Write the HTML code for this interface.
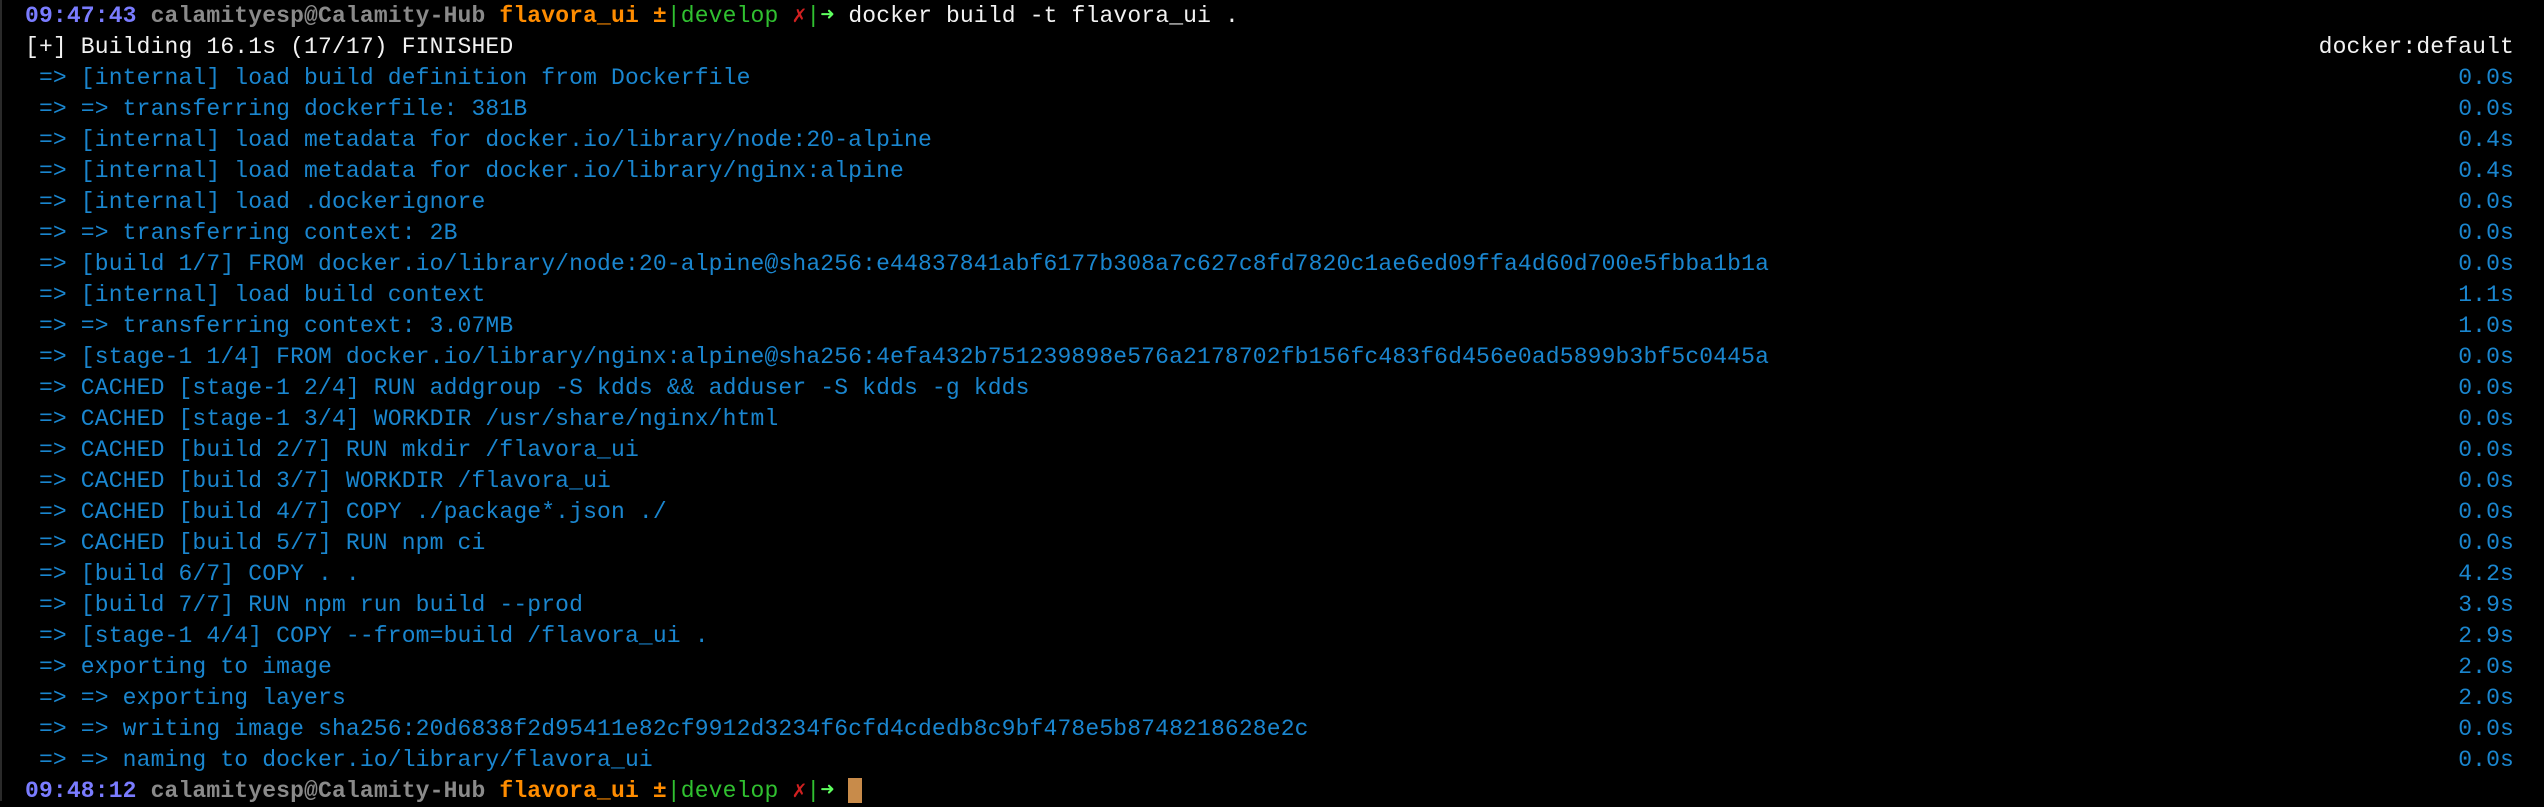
<!DOCTYPE html>
<html><head><meta charset="utf-8"><style>
html,body{margin:0;padding:0;background:#000;}
body{width:2544px;height:801px;overflow:hidden;position:relative;border-left:2px solid #2a2a2a;box-sizing:border-box;}
.l,.r{position:absolute;height:31px;line-height:31px;white-space:pre;font-family:"Liberation Mono","DejaVu Sans Mono",monospace;font-size:23px;letter-spacing:0.15px;color:#1a86cf;}
.l{left:23px;}
.r{right:30px;text-align:right;}
.w{color:#f2f2f2}
.t{color:#7a7cff;font-weight:bold}
.u{color:#8a8a8a;font-weight:bold}
.o{color:#ff8c00;font-weight:bold}
.g{color:#30c030}
.x{color:#d02020}
.a{color:#5fff5f;font-weight:bold}
.c{display:inline-block;width:14px;height:25px;background:#c88b4a;vertical-align:middle}
</style></head><body>
<div class="l" style="top:1px"><span class="t">09:47:43</span> <span class="u">calamityesp@Calamity-Hub</span> <span class="o">flavora_ui ±</span><span class="g">|develop </span><span class="x">✗</span><span class="g">|</span><span class="a">➜</span> <span class="w">docker build -t flavora_ui .</span></div>
<div class="l w" style="top:32px">[+] Building 16.1s (17/17) FINISHED</div><div class="r w" style="top:32px">docker:default</div>
<div class="l" style="top:63px"> => [internal] load build definition from Dockerfile</div><div class="r" style="top:63px">0.0s</div>
<div class="l" style="top:94px"> => => transferring dockerfile: 381B</div><div class="r" style="top:94px">0.0s</div>
<div class="l" style="top:125px"> => [internal] load metadata for docker.io/library/node:20-alpine</div><div class="r" style="top:125px">0.4s</div>
<div class="l" style="top:156px"> => [internal] load metadata for docker.io/library/nginx:alpine</div><div class="r" style="top:156px">0.4s</div>
<div class="l" style="top:187px"> => [internal] load .dockerignore</div><div class="r" style="top:187px">0.0s</div>
<div class="l" style="top:218px"> => => transferring context: 2B</div><div class="r" style="top:218px">0.0s</div>
<div class="l" style="top:249px"> => [build 1/7] FROM docker.io/library/node:20-alpine@sha256:e44837841abf6177b308a7c627c8fd7820c1ae6ed09ffa4d60d700e5fbba1b1a</div><div class="r" style="top:249px">0.0s</div>
<div class="l" style="top:280px"> => [internal] load build context</div><div class="r" style="top:280px">1.1s</div>
<div class="l" style="top:311px"> => => transferring context: 3.07MB</div><div class="r" style="top:311px">1.0s</div>
<div class="l" style="top:342px"> => [stage-1 1/4] FROM docker.io/library/nginx:alpine@sha256:4efa432b751239898e576a2178702fb156fc483f6d456e0ad5899b3bf5c0445a</div><div class="r" style="top:342px">0.0s</div>
<div class="l" style="top:373px"> => CACHED [stage-1 2/4] RUN addgroup -S kdds &amp;&amp; adduser -S kdds -g kdds</div><div class="r" style="top:373px">0.0s</div>
<div class="l" style="top:404px"> => CACHED [stage-1 3/4] WORKDIR /usr/share/nginx/html</div><div class="r" style="top:404px">0.0s</div>
<div class="l" style="top:435px"> => CACHED [build 2/7] RUN mkdir /flavora_ui</div><div class="r" style="top:435px">0.0s</div>
<div class="l" style="top:466px"> => CACHED [build 3/7] WORKDIR /flavora_ui</div><div class="r" style="top:466px">0.0s</div>
<div class="l" style="top:497px"> => CACHED [build 4/7] COPY ./package*.json ./</div><div class="r" style="top:497px">0.0s</div>
<div class="l" style="top:528px"> => CACHED [build 5/7] RUN npm ci</div><div class="r" style="top:528px">0.0s</div>
<div class="l" style="top:559px"> => [build 6/7] COPY . .</div><div class="r" style="top:559px">4.2s</div>
<div class="l" style="top:590px"> => [build 7/7] RUN npm run build --prod</div><div class="r" style="top:590px">3.9s</div>
<div class="l" style="top:621px"> => [stage-1 4/4] COPY --from=build /flavora_ui .</div><div class="r" style="top:621px">2.9s</div>
<div class="l" style="top:652px"> => exporting to image</div><div class="r" style="top:652px">2.0s</div>
<div class="l" style="top:683px"> => => exporting layers</div><div class="r" style="top:683px">2.0s</div>
<div class="l" style="top:714px"> => => writing image sha256:20d6838f2d95411e82cf9912d3234f6cfd4cdedb8c9bf478e5b8748218628e2c</div><div class="r" style="top:714px">0.0s</div>
<div class="l" style="top:745px"> => => naming to docker.io/library/flavora_ui</div><div class="r" style="top:745px">0.0s</div>
<div class="l" style="top:776px"><span class="t">09:48:12</span> <span class="u">calamityesp@Calamity-Hub</span> <span class="o">flavora_ui ±</span><span class="g">|develop </span><span class="x">✗</span><span class="g">|</span><span class="a">➜</span> <span class="c"></span></div>
</body></html>
